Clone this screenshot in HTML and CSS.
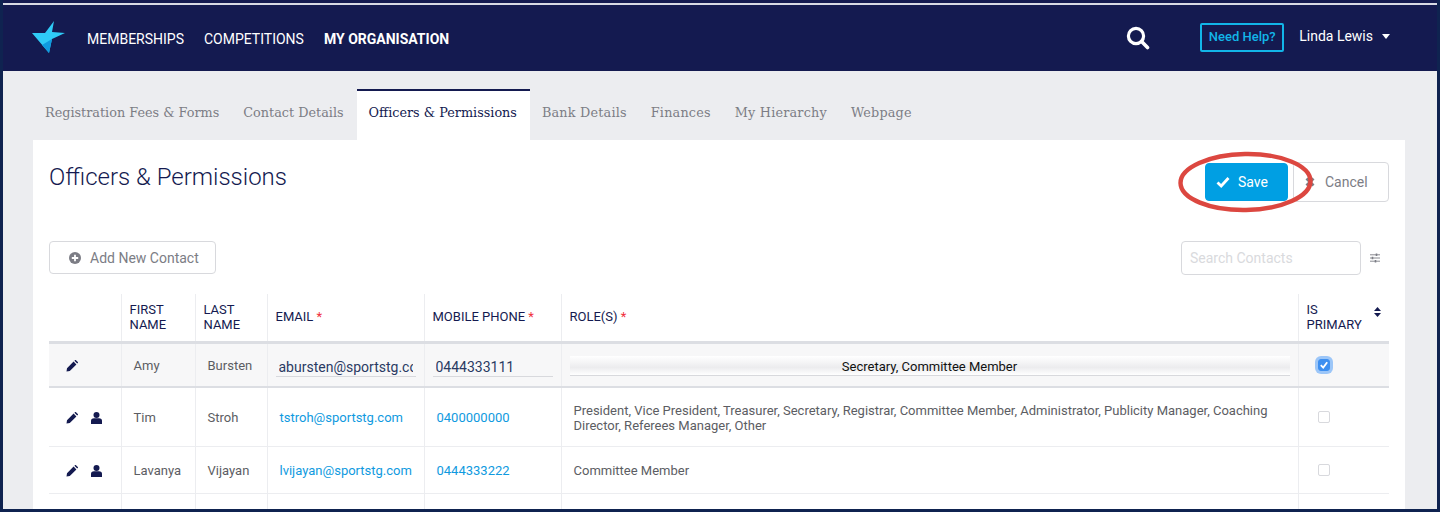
FILE: index.html
```html
<!DOCTYPE html>
<html lang="en">
<head>
    <meta charset="UTF-8">
    <title>Officers &amp; Permissions</title>
    <link rel="stylesheet" href="styles.css">
</head>
<body>
    <div class="frame">
        <header class="topbar">
            <svg class="logo" viewBox="0 0 33 32" width="33" height="32">
                <path d="M0 12 L13 12 L22 0 L20 11 L33 12 L20 18 L17 32 Z" fill="#2fcbf7"/>
                <path d="M20 18 L17 32 L10 24 Z" fill="#0f9be0"/>
            </svg>
            <nav class="mainnav">
                <a>MEMBERSHIPS</a>
                <a>COMPETITIONS</a>
                <a class="active">MY ORGANISATION</a>
            </nav>
            <svg class="search" viewBox="0 0 24 24" width="24" height="24">
                <circle cx="10" cy="10" r="7.6" fill="none" stroke="#fff" stroke-width="3.2"/>
                <path d="M15.6 15.6 L21.5 21.5" stroke="#fff" stroke-width="3.6" stroke-linecap="round"/>
            </svg>
            <a class="help">Need Help?</a>
            <a class="user">Linda Lewis<span class="caret"></span></a>
        </header>

        <div class="content">
            <ul class="tabs">
                <li>Registration Fees &amp; Forms</li>
                <li>Contact Details</li>
                <li class="active">Officers &amp; Permissions</li>
                <li>Bank Details</li>
                <li>Finances</li>
                <li>My Hierarchy</li>
                <li>Webpage</li>
            </ul>

            <section class="panel">
                <div class="panel-head">
                    <h1>Officers &amp; Permissions</h1>
                    <div class="actions">
                        <button class="btn btn-save">
                            <svg viewBox="0 0 14 12" width="14" height="12"><path d="M1.5 6.5 L5.2 10 L12.5 2" fill="none" stroke="#fff" stroke-width="2.8"/></svg>
                            Save
                        </button>
                        <button class="btn btn-cancel">
                            <svg viewBox="0 0 10 10" width="10" height="10"><path d="M1.5 1.5 L8.5 8.5 M8.5 1.5 L1.5 8.5" stroke="#7c7d85" stroke-width="2.8"/></svg>
                            Cancel
                        </button>
                        <svg class="ring" viewBox="0 0 136 62" width="136" height="62">
                            <ellipse cx="67.5" cy="31" rx="65" ry="28" fill="none" stroke="#dc4740" stroke-width="4.4" transform="rotate(-1 68 31)"/>
                        </svg>
                    </div>
                </div>

                <div class="toolbar">
                    <button class="btn btn-add">
                        <svg viewBox="0 0 12 12" width="12" height="12"><circle cx="6" cy="6" r="6" fill="#7c7d85"/><path d="M6 2.8 V9.2 M2.8 6 H9.2" stroke="#fff" stroke-width="1.8"/></svg>
                        Add New Contact
                    </button>
                    <div class="search-box">
                        <input class="search-input" type="text" placeholder="Search Contacts">
                        <svg viewBox="0 0 10 10" width="10" height="10">
                            <path d="M0 1.8 H10 M0 5 H10 M0 8.2 H10" stroke="#7c7d85" stroke-width="0.9"/>
                            <path d="M6.5 .6 V3 M2.5 3.8 V6.2 M5.5 7 V9.4" stroke="#7c7d85" stroke-width="1.6"/>
                        </svg>
                    </div>
                </div>

                <table class="grid">
                    <colgroup>
                        <col class="c-icons"><col class="c-first"><col class="c-last"><col class="c-email"><col class="c-phone"><col><col class="c-primary">
                    </colgroup>
                    <thead>
                        <tr>
                            <th></th>
                            <th class="wrap">FIRST NAME</th>
                            <th class="wrap">LAST NAME</th>
                            <th>EMAIL <span class="req">*</span></th>
                            <th>MOBILE PHONE <span class="req">*</span></th>
                            <th>ROLE(S) <span class="req">*</span></th>
                            <th class="wrap th-primary">
                                IS PRIMARY
                                <svg class="sort" viewBox="0 0 7 10" width="7" height="10"><path d="M3.5 0 L7 4 H0 Z M3.5 10 L0 6 H7 Z" fill="#141a50"/></svg>
                            </th>
                        </tr>
                    </thead>
                    <tbody>
                        <tr class="editing">
                            <td class="icons">
                                <svg class="ico" viewBox="0 0 12 12" width="12" height="12"><path d="M0.5 11.5 L1 8.2 L7.6 1.6 L10.4 4.4 L3.8 11 Z M8.4 .8 L9.2 0 Q9.6 -.2 10 .2 L11.8 2 Q12.2 2.4 12 2.8 L11.2 3.6 Z" fill="#141a50"/></svg>
                            </td>
                            <td class="name">Amy</td>
                            <td class="name">Bursten</td>
                            <td><input class="cell-input" type="text" value="abursten@sportstg.com"></td>
                            <td><input class="cell-input" type="text" value="0444333111"></td>
                            <td><div class="role-select">Secretary, Committee Member</div></td>
                            <td class="check"><span class="box checked"><svg viewBox="0 0 10 10" width="10" height="10"><path d="M1.8 5.2 L4.2 7.6 L8.2 2.2" fill="none" stroke="#fff" stroke-width="1.8"/></svg></span></td>
                        </tr>
                        <tr class="row-two">
                            <td class="icons">
                                <svg class="ico" viewBox="0 0 12 12" width="12" height="12"><path d="M0.5 11.5 L1 8.2 L7.6 1.6 L10.4 4.4 L3.8 11 Z M8.4 .8 L9.2 0 Q9.6 -.2 10 .2 L11.8 2 Q12.2 2.4 12 2.8 L11.2 3.6 Z" fill="#141a50"/></svg>
                                <svg class="ico" viewBox="0 0 11 12" width="11" height="12"><circle cx="5.5" cy="3" r="3" fill="#141a50"/><path d="M0 12 V9 Q0 6.2 3 6.2 H8 Q11 6.2 11 9 V12 Z" fill="#141a50"/></svg>
                            </td>
                            <td class="name">Tim</td>
                            <td class="name">Stroh</td>
                            <td class="link">tstroh@sportstg.com</td>
                            <td class="link">0400000000</td>
                            <td class="roles">President, Vice President, Treasurer, Secretary, Registrar, Committee Member, Administrator, Publicity Manager, Coaching Director, Referees Manager, Other</td>
                            <td class="check"><span class="box"></span></td>
                        </tr>
                        <tr class="row-three">
                            <td class="icons">
                                <svg class="ico" viewBox="0 0 12 12" width="12" height="12"><path d="M0.5 11.5 L1 8.2 L7.6 1.6 L10.4 4.4 L3.8 11 Z M8.4 .8 L9.2 0 Q9.6 -.2 10 .2 L11.8 2 Q12.2 2.4 12 2.8 L11.2 3.6 Z" fill="#141a50"/></svg>
                                <svg class="ico" viewBox="0 0 11 12" width="11" height="12"><circle cx="5.5" cy="3" r="3" fill="#141a50"/><path d="M0 12 V9 Q0 6.2 3 6.2 H8 Q11 6.2 11 9 V12 Z" fill="#141a50"/></svg>
                            </td>
                            <td class="name">Lavanya</td>
                            <td class="name">Vijayan</td>
                            <td class="link">lvijayan@sportstg.com</td>
                            <td class="link">0444333222</td>
                            <td class="roles">Committee Member</td>
                            <td class="check"><span class="box"></span></td>
                        </tr>
                        <tr class="row-empty">
                            <td></td><td></td><td></td><td></td><td></td><td></td><td></td>
                        </tr>
                    </tbody>
                </table>
            </section>
        </div>
    </div>
</body>
</html>
```

FILE: styles.css
```css
* {
    box-sizing: border-box;
}
html, body {
    height: 100%;
}
body {
    margin: 0;
    background: #0f2350;
    font-family: 'Roboto', sans-serif;
    overflow: hidden;
}
.frame {
    height: 509px;
    margin: 0 3px 0 3px;
    padding-top: 3px;
    overflow: hidden;
    background: #141a50;
}
.topbar {
    height: 68px;
    border-top: 2px solid #d8dae4;
    display: flex;
    align-items: center;
    background: #141a50;
    color: #fff;
    padding: 0 47px 0 29px;
}
.logo {
    margin-top: -3px;
}
.mainnav {
    display: flex;
    gap: 20px;
    margin-left: 22px;
    margin-top: 2px;
    font-size: 14px;
    flex: 1;
}
.mainnav .active {
    font-weight: 700;
}
.search {
    margin-right: 50px;
}
.help {
    width: 84px;
    text-align: center;
    border: 2px solid #12b5e8;
    border-radius: 2px;
    color: #12b5e8;
    font-size: 13px;
    font-weight: 500;
    padding: 4px 0 6px;
    margin-right: 15px;
    margin-top: -2px;
}
.user {
    font-size: 14px;
    margin-top: -5px;
}
.caret {
    display: inline-block;
    margin-left: 9px;
    vertical-align: 2px;
    border-left: 4px solid transparent;
    border-right: 4px solid transparent;
    border-top: 5px solid #fff;
}
.content {
    background: #ecedf0;
    height: 438px;
    padding: 18px 32px 0 30px;
}
.tabs {
    display: flex;
    list-style: none;
    margin: 0;
    padding: 0;
    height: 51px;
    font-family: 'DejaVu Serif', serif;
    font-size: 12.8px;
    color: #7c7d85;
}
.tabs li {
    padding: 16px 12px 0;
}
.tabs .active {
    background: #fff;
    border-top: 2px solid #141a50;
    color: #141a50;
    margin-left: 1px;
    padding: 14px 13px 0 12px;
}
.tabs .active ~ li {
    letter-spacing: .2px;
}
.panel {
    background: #fff;
    height: 400px;
    padding: 0 16px;
}
.panel-head {
    display: flex;
    justify-content: space-between;
    height: 101px;
    padding-top: 22px;
}
h1 {
    margin: 0;
    font-size: 24px;
    line-height: 30px;
    font-weight: 300;
    color: #141a50;
}
.actions {
    position: relative;
    display: flex;
    gap: 5px;
    height: 40px;
}
.btn {
    font-family: 'Roboto', sans-serif;
    font-size: 14px;
    border-radius: 4px;
    display: flex;
    align-items: center;
    padding: 0;
    background: #fff;
    color: #7c7d85;
    border: 1px solid #d8d9dd;
}
.btn-save {
    width: 83px;
    height: 38px;
    margin-top: 1px;
    background: #009fe3;
    border-color: #009fe3;
    color: #fff;
    padding-left: 10px;
    gap: 8px;
}
.btn-cancel {
    width: 96px;
    height: 40px;
    padding-left: 11px;
    gap: 10px;
}
.ring {
    position: absolute;
    left: -27px;
    top: -11px;
}
.toolbar {
    display: flex;
    justify-content: space-between;
    align-items: flex-start;
}
.btn-add {
    width: 167px;
    height: 33px;
    padding-left: 19px;
    gap: 9px;
}
.search-box {
    display: flex;
    align-items: center;
    gap: 9px;
    padding-right: 9px;
    height: 33px;
}
.search-input {
    width: 180px;
    height: 34px;
    border: 1px solid #d8d9dd;
    border-radius: 4px;
    padding: 0 8px;
    font-family: 'Roboto', sans-serif;
    font-size: 14px;
    outline: none;
}
.search-input::placeholder {
    color: #d9dadd;
}
.grid {
    width: 1340px;
    margin-top: 20px;
    border-collapse: collapse;
    table-layout: fixed;
    font-size: 13px;
}
.c-icons { width: 72px; }
.c-first { width: 74px; }
.c-last { width: 72px; }
.c-email { width: 157px; }
.c-phone { width: 137px; }
.c-primary { width: 91px; }
.grid th, .grid td {
    border-left: 1px solid #ecedf0;
    padding: 0 8px;
}
.grid th:first-child, .grid td:first-child {
    border-left: 0;
}
.grid th {
    height: 48px;
    text-align: left;
    font-weight: 400;
    line-height: 15px;
    color: #141a50;
    border-bottom: 3px solid #dcdee3;
    padding-bottom: 2px;
}
.grid th.wrap {
    padding-bottom: 0;
}
.th-primary {
    position: relative;
    padding-right: 26px !important;
}
.sort {
    position: absolute;
    right: 8px;
    top: 13px;
}
.req {
    color: #f0303c;
}
.grid td {
    color: #5c5d63;
    border-bottom: 1px solid #ecedf0;
    padding-top: 2px;
}
.editing td {
    height: 45px;
    background: #f7f7f8;
    border-bottom: 2px solid #dcdee3;
}
.row-two td {
    height: 59px;
}
.row-three td {
    height: 47px;
}
.row-empty td {
    height: 30px;
}
.grid td.icons {
    padding: 0 0 0 17px;
}
.ico {
    margin-right: 10px;
    display: inline-block;
    vertical-align: middle;
}
.grid td.name {
    padding-left: 12px;
}
.grid td.link {
    padding-left: 12px;
    color: #0f9ae0;
}
.grid td.roles {
    padding: 2px 12px 0 12px;
    line-height: 15px;
}
.cell-input {
    width: 100%;
    height: 22px;
    border: 0;
    border-bottom: 1px solid #d8d9dd;
    background: transparent;
    padding: 3px 3px 0;
    font-family: 'Roboto', sans-serif;
    font-size: 14px;
    color: #2a3a63;
    outline: none;
    display: block;
}
.role-select {
    height: 20px;
    line-height: 21px;
    text-align: center;
    color: #111;
    font-size: 13px;
    border-bottom: 1px solid #d8d9dd;
    background: linear-gradient(#fff, #ececee 60%, #fff);
}
.grid td.check {
    text-align: center;
    padding: 0 40px 2px 0;
}
.box {
    display: inline-flex;
    align-items: center;
    justify-content: center;
    width: 12px;
    height: 12px;
    border: 1px solid #d8d9dd;
    border-radius: 2px;
    vertical-align: middle;
}
.box.checked {
    background: #3d8ff0;
    border-color: #3d8ff0;
    border-radius: 3px;
    box-shadow: 0 0 0 3px #9cc6f8;
}
```
